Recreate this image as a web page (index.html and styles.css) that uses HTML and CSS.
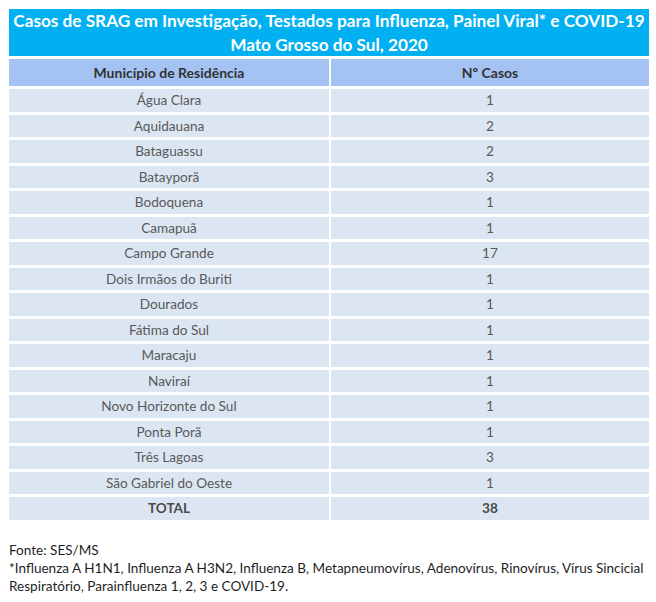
FILE: index.html
```html
<!DOCTYPE html>
<html lang="pt-BR">
<head>
<meta charset="utf-8">
<title>Casos de SRAG - MS 2020</title>
<link rel="stylesheet" href="styles.css">
</head>
<body>
<div class="page">
  <div class="title">Casos de SRAG em Investigação, Testados para Influenza, Painel Viral* e COVID-19<br>Mato Grosso do Sul, 2020</div>
  <div class="grid">
    <div class="cell head">Município de Residência</div>
    <div class="cell head">Nº Casos</div>
    <div class="cell">Água Clara</div><div class="cell">1</div>
    <div class="cell">Aquidauana</div><div class="cell">2</div>
    <div class="cell">Bataguassu</div><div class="cell">2</div>
    <div class="cell">Batayporã</div><div class="cell">3</div>
    <div class="cell">Bodoquena</div><div class="cell">1</div>
    <div class="cell">Camapuã</div><div class="cell">1</div>
    <div class="cell">Campo Grande</div><div class="cell">17</div>
    <div class="cell">Dois Irmãos do Buriti</div><div class="cell">1</div>
    <div class="cell">Dourados</div><div class="cell">1</div>
    <div class="cell">Fátima do Sul</div><div class="cell">1</div>
    <div class="cell">Maracaju</div><div class="cell">1</div>
    <div class="cell">Naviraí</div><div class="cell">1</div>
    <div class="cell">Novo Horizonte do Sul</div><div class="cell">1</div>
    <div class="cell">Ponta Porã</div><div class="cell">1</div>
    <div class="cell">Três Lagoas</div><div class="cell">3</div>
    <div class="cell">São Gabriel do Oeste</div><div class="cell">1</div>
    <div class="cell total">TOTAL</div><div class="cell total">38</div>
  </div>
  <div class="notes">
    <p>Fonte: SES/MS</p>
    <p>*Influenza A H1N1, Influenza A H3N2, Influenza B, Metapneumovírus, Adenovírus, Rinovírus, Vírus Sincicial Respiratório, Parainfluenza 1, 2, 3 e COVID-19.</p>
  </div>
</div>
</body>
</html>
```
FILE: styles.css
```css
html, body {
  margin: 0;
  padding: 0;
  background: #ffffff;
}
.page {
  padding: 9px 0 0 9px;
  width: 640px;
  font-family: Lato, "Open Sans", sans-serif;
}
.title {
  background: #00b0f0;
  color: #ffffff;
  font-weight: bold;
  font-size: 17.2px;
  line-height: 24px;
  height: 47px;
  text-align: center;
  white-space: nowrap;
  margin-bottom: 3px;
}
.grid {
  display: grid;
  grid-template-columns: 320px 318px;
  grid-template-rows: 27px;
  grid-auto-rows: 22.5px;
  column-gap: 2px;
  row-gap: 3px;
}
.cell {
  background: #dce6f3;
  color: #595959;
  font-size: 13.6px;
  display: flex;
  align-items: center;
  justify-content: center;
}
.cell.head {
  background: #a4c2f2;
  color: #333333;
  font-weight: bold;
  font-size: 14px;
}
.cell.total {
  font-weight: bold;
  color: #4a4a4a;
}
.notes {
  margin-top: 21px;
  font-size: 13.55px;
  line-height: 18px;
  color: #1f1f1f;
}
.notes p {
  margin: 0;
}
```
